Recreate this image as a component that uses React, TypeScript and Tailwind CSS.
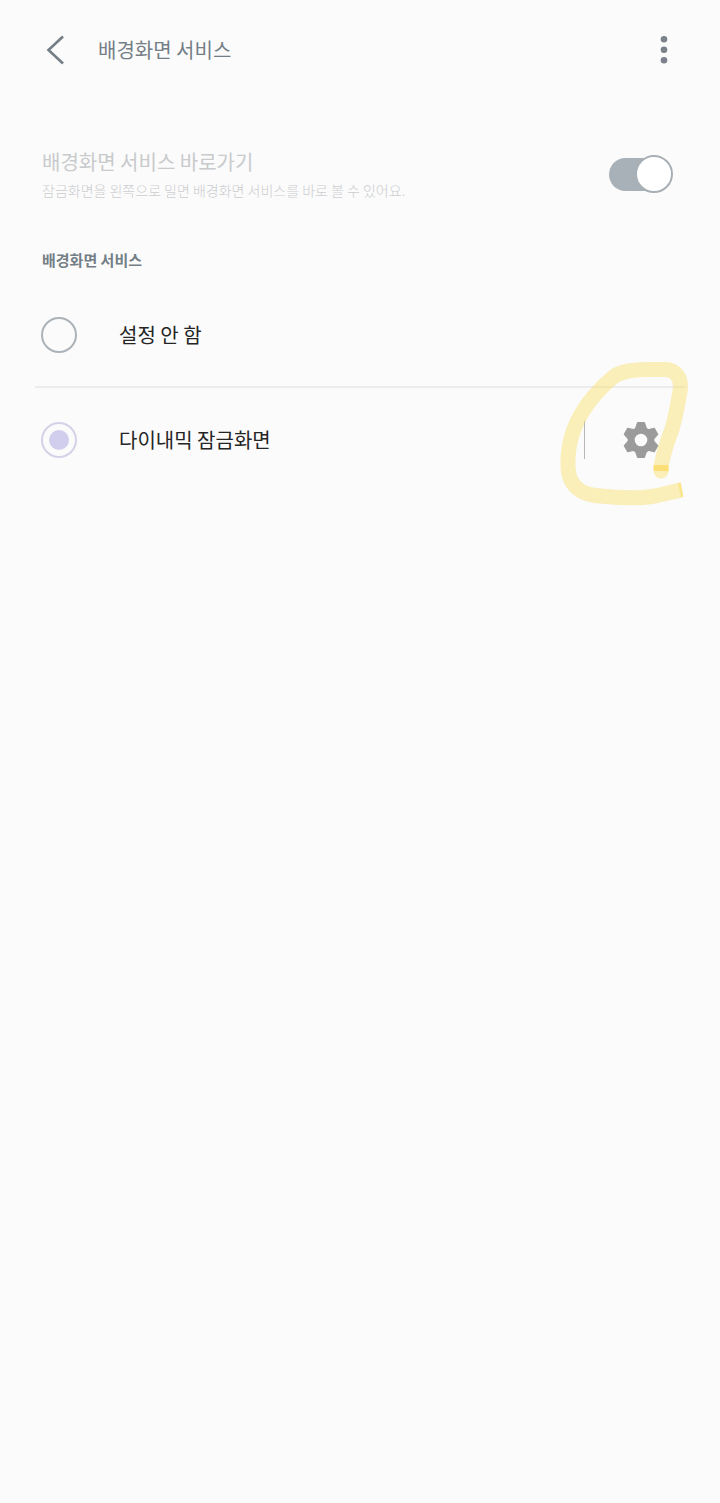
import { useState } from "react";

const services = [
  { id: "none", label: "설정 안 함", hasSettings: false },
  { id: "dynamic", label: "다이내믹 잠금화면", hasSettings: true },
];

const toothAngles = [0, 60, 120, 180, 240, 300];

function GearIcon() {
  return (
    <svg width="44" height="44" viewBox="-22 -22 44 44" fill="currentColor">
      <circle r="9.800" fill="none" stroke="currentColor" strokeWidth="7" />
      {toothAngles.map((angle) => (
        <path
          key={angle}
          transform={`rotate(${angle})`}
          d="M-5.500-11 -3.400-17.300h6.800L5.500-11z"
          stroke="currentColor"
          strokeWidth="1.2"
          strokeLinejoin="round"
        />
      ))}
    </svg>
  );
}

function Header() {
  return (
    <header className="flex h-[100px] items-center pr-11 pl-9">
      <button type="button" aria-label="뒤로" className="text-[#747e86]">
        <svg width="40" height="40" viewBox="0 0 40 40" fill="none">
          <path d="M27 6.5 12.5 20 27 33.5" stroke="currentColor" strokeWidth="2.6" />
        </svg>
      </button>
      <h1 className="ml-[22px] flex-1 text-xl text-[#747e86]">
        배경화면 서비스
      </h1>
      <button type="button" aria-label="더보기" className="text-[#7b8289]">
        <svg width="24" height="40" viewBox="0 0 24 40" fill="currentColor">
          <circle cx="12" cy="9.2" r="3.3" />
          <circle cx="12" cy="19.8" r="3.3" />
          <circle cx="12" cy="30.3" r="3.3" />
        </svg>
      </button>
    </header>
  );
}

function ShortcutSetting() {
  return (
    <section className="flex items-center justify-between pt-12 pr-[49px] pl-[42px]">
      <label htmlFor="shortcut">
        <span className="block text-xl leading-7 text-[#c8cacc]">
          배경화면 서비스 바로가기
        </span>
        <span className="mt-1 block text-sm leading-5 font-light text-[#cccdcf]">
          잠금화면을 왼쪽으로 밀면 배경화면 서비스를 바로 볼 수 있어요.
        </span>
      </label>
      <input
        id="shortcut"
        type="checkbox"
        role="switch"
        defaultChecked
        disabled
        className="flex h-[33px] w-[62px] shrink-0 appearance-none items-center justify-end rounded-full bg-[#a8b1b8] before:-mr-0.5 before:size-[38px] before:shrink-0 before:rounded-full before:border-2 before:border-[#a8b0b6] before:bg-white before:content-['']"
      />
    </section>
  );
}

function HighlighterMark() {
  return (
    <svg
      className="pointer-events-none absolute -top-[38px] -right-[35px]"
      width="180"
      height="170"
      viewBox="0 0 180 170"
      fill="none"
      aria-hidden="true"
    >
      <path
        d="M142 140 C129 142 117 147 103 147.500 C88 148.500 70 147 55 145.500 C36 143 28 131 28 116 C27 90 37 66 54 46 C61 38 69 30 76 25 C86 20 97 19.500 107 19.500 L126 19.500 C136 20 141 28 140.500 38 C138 54 135 69 132 79 C127 92 123 105 121.500 115 L121 121"
        stroke="#f9dc5c"
        strokeOpacity="0.42"
        strokeWidth="15"
      />
      <path d="M113.500 121h15a7.500 7.500 0 0 1-15 0z" fill="#f9dc5c" fillOpacity="0.42" />
      <path d="M113.500 115h15v6h-15z" fill="#fbd95a" fillOpacity="0.7" />
      <path d="m138 133 2.500-.6 3 14-2.500.6z" fill="#f9dc5c" fillOpacity="0.5" />
    </svg>
  );
}

function ServiceList() {
  const [selected, setSelected] = useState("dynamic");

  return (
    <section>
      <h2
        id="services-title"
        className="mt-12 pl-[42px] text-[15px] leading-6 font-bold text-[#747e86]"
      >
        배경화면 서비스
      </h2>
      <div
        role="radiogroup"
        aria-labelledby="services-title"
        className="mx-[35px] mt-3 divide-y-2 divide-[#ececed]"
      >
        {services.map((service) => (
          <div
            key={service.id}
            className="relative flex h-[104px] items-center pr-[22px] pl-1.5"
          >
            <input
              id={service.id}
              type="radio"
              name="service"
              checked={selected === service.id}
              onChange={() => setSelected(service.id)}
              className="flex size-9 shrink-0 appearance-none items-center justify-center rounded-full border-2 border-[#acb3b8] before:size-5 before:rounded-full before:content-[''] checked:border-[#d5d2e8] checked:before:bg-[#d0ceec]"
            />
            <label
              htmlFor={service.id}
              className="flex-1 pl-[42px] text-xl text-[#252525]"
            >
              {service.label}
            </label>
            {service.hasSettings ? (
              <>
                <div className="mr-[34px] h-[38px] w-px bg-[#b5b8ba]" />
                <button
                  type="button"
                  aria-label="다이내믹 잠금화면 설정"
                  className="text-[#9b9b9b]"
                >
                  <GearIcon />
                </button>
                <HighlighterMark />
              </>
            ) : null}
          </div>
        ))}
      </div>
    </section>
  );
}

export default function App() {
  return (
    <main className="min-h-screen bg-[#fbfbfb] font-['Noto_Sans_CJK_KR',sans-serif]">
      <Header />
      <ShortcutSetting />
      <ServiceList />
    </main>
  );
}
